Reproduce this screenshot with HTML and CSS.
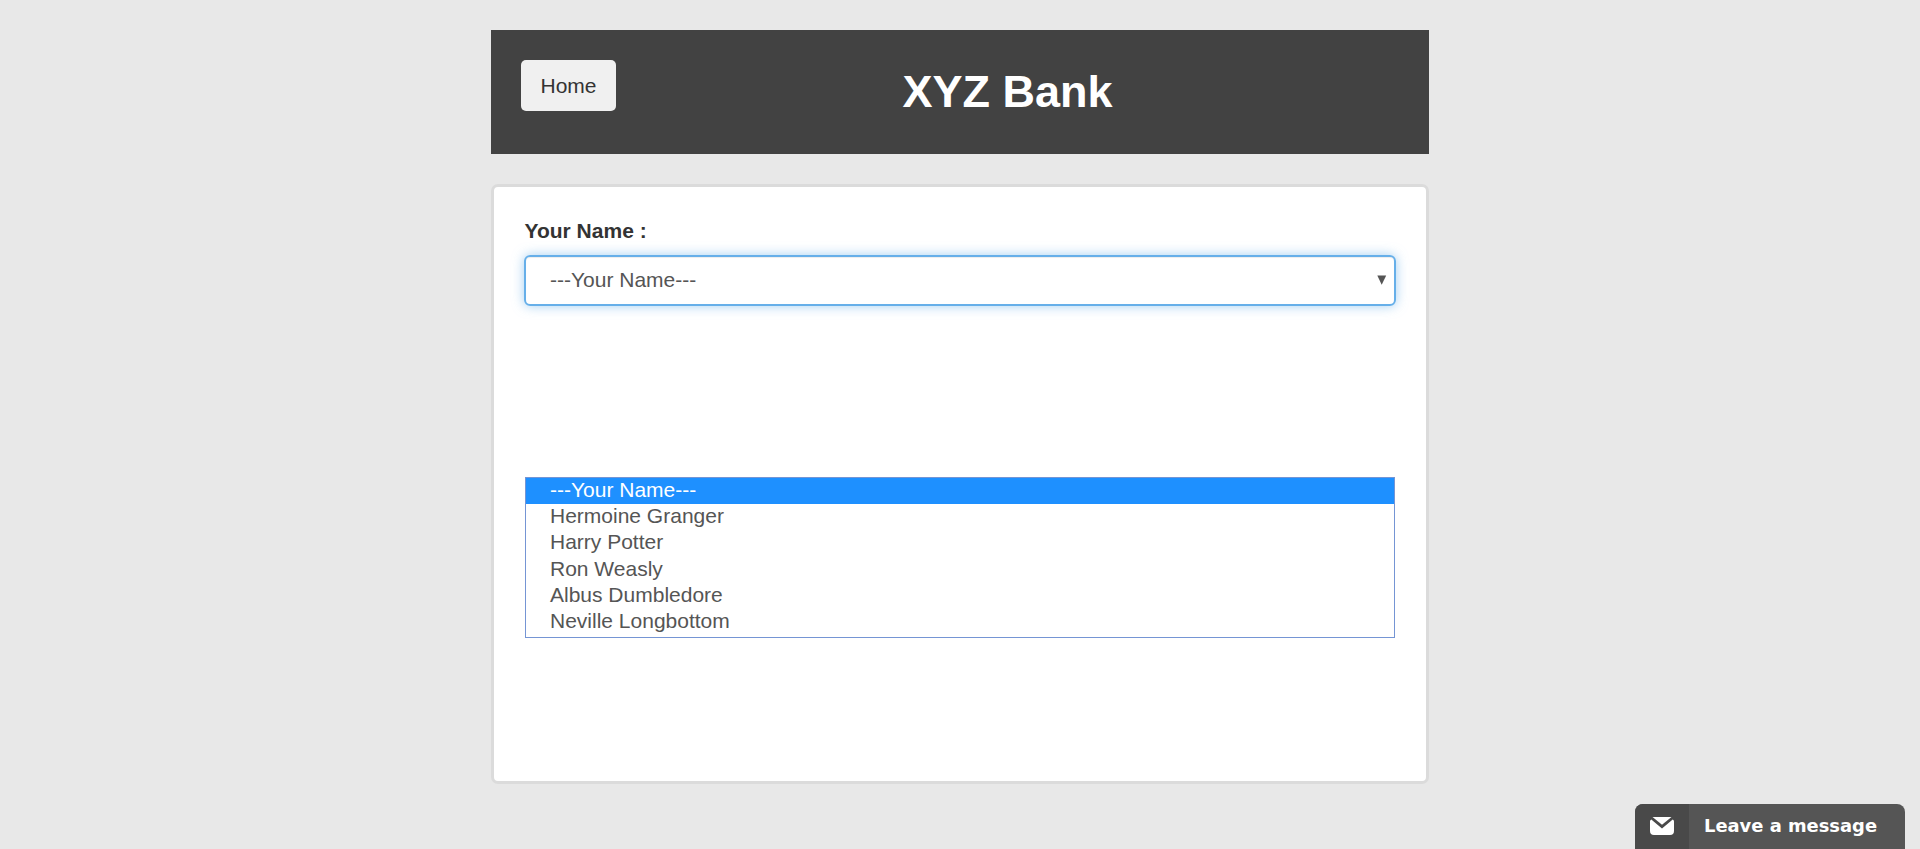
FILE: index.html
```html
<!DOCTYPE html>
<html lang="en">
<head>
<meta charset="utf-8">
<title>XYZ Bank</title>
<link rel="stylesheet" href="styles.css">
</head>
<body>
<div class="page">
  <header class="header">
    <button class="home" type="button">Home</button>
    <strong class="title"><span class="title-text">XYZ Bank</span></strong>
  </header>
  <main class="card">
    <div class="label"><span class="label-text">Your Name :</span></div>
    <div class="select">
      <span class="select-text">---Your Name---</span>
      <svg class="arrow" width="10" height="10" viewBox="0 0 10 10"><path d="M.3 .5H9.2L4.7 9.7Z" fill="#555"/></svg>
    </div>
    <ul class="options">
      <li class="option selected">---Your Name---</li>
      <li class="option">Hermoine Granger</li>
      <li class="option">Harry Potter</li>
      <li class="option">Ron Weasly</li>
      <li class="option">Albus Dumbledore</li>
      <li class="option">Neville Longbottom</li>
    </ul>
  </main>
</div>
<div class="chat">
  <div class="chat-icon">
    <svg width="24" height="18" viewBox="0 0 24 18"><path d="M2.5 0H21.5L12 7.8Z" fill="#fff"/><path d="M0 4.5Q0 3 1.3 2.6L12 11.6L22.7 2.6Q24 3 24 4.5V14Q24 18 20 18H4Q0 18 0 14Z" fill="#fff"/></svg>
  </div>
  <div class="chat-label"><span class="chat-text">Leave a message</span></div>
</div>
</body>
</html>
```
FILE: styles.css
```css
* { box-sizing: border-box; }
body {
  margin: 0;
  height: 849px;
  overflow: hidden;
  background: #e8e8e8;
  color: #333;
  font: 21px/28px "Liberation Sans", Arial, sans-serif;
}
.page { width: 938px; margin: 0 auto; padding-top: 30px; }
.header {
  display: flex;
  align-items: flex-start;
  height: 124px;
  padding: 30px;
  background: #424242;
}
.home {
  width: 95px;
  height: 51px;
  padding: 0;
  border: 0;
  border-radius: 5px;
  background: #f0f0f0;
  color: #333;
  font: inherit;
}
.title {
  flex: 1;
  text-align: center;
  color: #fff;
  font-size: 45px;
  line-height: 63px;
}
.card {
  height: 600px;
  margin-top: 30px;
  padding: 30px;
  border: 3px solid #dbdbdb;
  border-radius: 7px;
  background: #fff;
}
.label { height: 38px; padding-left: .5px; font-weight: bold; }
.select {
  display: flex;
  align-items: center;
  justify-content: space-between;
  height: 51px;
  padding: 0 7px 1px 24px;
  border: 2px solid #66afe9;
  border-radius: 6px;
  box-shadow: inset 0 1px 1px rgba(0,0,0,.075), 0 0 12px rgba(102,175,233,.6);
  color: #555;
}
.options {
  list-style: none;
  height: 161px;
  margin: 171px 1px 0;
  padding: 0;
  border: 1px solid #7595d4;
  color: #555;
}
.option { height: 26.2px; padding-left: 24px; line-height: 24px; }
.selected { background: #1e90ff; color: #fff; }
.chat {
  position: absolute;
  right: 15px;
  bottom: 0;
  display: flex;
  width: 270px;
  height: 45px;
  overflow: hidden;
  border-radius: 8px 8px 0 0;
  background: #555;
  color: #fff;
}
.chat-icon { width: 54px; padding: 13px 0 0 15px; background: #494949; line-height: 0; }
.chat-label { padding: 8px 0 0 15px; font: bold 17.9px/28px "DejaVu Sans", Verdana, sans-serif; white-space: nowrap; }
```
